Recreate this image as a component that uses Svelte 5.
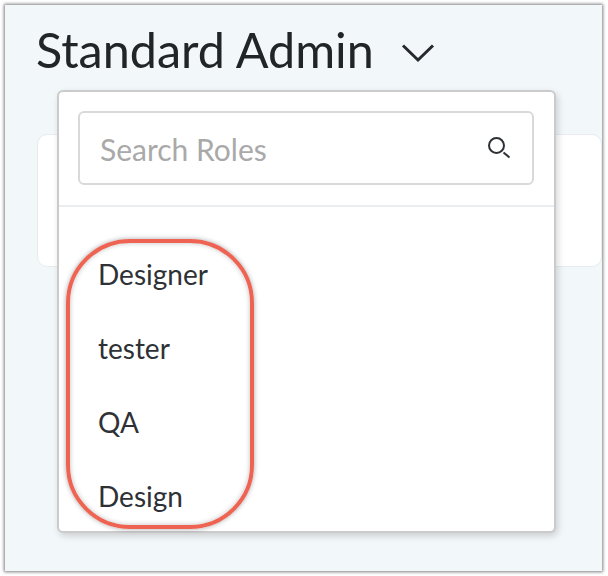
<script lang="ts">
  const roles = ['Designer', 'tester', 'QA', 'Design'];
</script>

<div class="screen">
  <div class="window">
    <header class="title">
      <h1>Standard Admin</h1>
      <svg class="chevron" width="34" height="20" viewBox="0 0 34 20" aria-hidden="true">
        <path d="M2 2.5 L17 17 L32 2.5" fill="none" stroke="#262a2e" stroke-width="3" />
      </svg>
    </header>

    <section class="card"></section>

    <div class="dropdown">
      <div class="search-wrap">
        <div class="search">
          <span class="placeholder">Search Roles</span>
          <svg width="24" height="24" viewBox="0 0 24 24" aria-hidden="true">
            <circle cx="9.5" cy="9.5" r="7.5" fill="none" stroke="#2d3136" stroke-width="2" />
            <path d="M16.5 16.5 L22.5 21.5" fill="none" stroke="#2d3136" stroke-width="2" />
          </svg>
        </div>
      </div>
      <ul class="roles">
        {#each roles as role}
          <li>{role}</li>
        {/each}
      </ul>
      <div class="ring"></div>
    </div>
  </div>
</div>

<style>
  :global(body) {
    background: #fff;
    font-family: Lato, "Liberation Sans", sans-serif;
    margin: 0;
  }

  .screen {
    box-sizing: border-box;
    height: 576px;
    padding: 5px 6px 5px 5px;
    width: 608px;
  }

  .window {
    background: #f2f7fa;
    box-shadow: 0 0 3px 1px #7f7f7f;
    height: 100%;
    overflow: hidden;
    position: relative;
  }

  .title {
    align-items: center;
    display: flex;
    gap: 27px;
    padding: 14px 0 0 31px;
  }

  h1 {
    color: #222528;
    font-size: 48.5px;
    font-weight: 400;
    line-height: 60px;
    margin: 0;
  }

  .chevron {
    margin-top: 7px;
  }

  .card {
    background: #fff;
    border: 1px solid #e6ebef;
    border-radius: 10px;
    box-sizing: border-box;
    height: 133px;
    margin: 55px 0 0 32px;
  }

  .dropdown {
    background: #fff;
    border: 2px solid #cbcbcb;
    border-radius: 6px;
    box-shadow: 2px 3px 7px rgba(0, 0, 0, 0.16);
    box-sizing: border-box;
    height: 443px;
    left: 52px;
    position: absolute;
    top: 85px;
    width: 499px;
  }

  .search-wrap {
    border-bottom: 2px solid #ebeef0;
    padding: 19px 20px 20px 19px;
  }

  .search {
    align-items: center;
    border: 2px solid #d9d9d9;
    border-radius: 6px;
    box-sizing: border-box;
    display: flex;
    height: 74px;
    justify-content: space-between;
    padding: 0 21px 0 20px;
  }

  .placeholder {
    color: #a9a9a9;
    font-size: 30px;
    padding-top: 2px;
  }

  .roles {
    color: #2e3135;
    font-size: 28px;
    list-style: none;
    margin: 0;
    padding: 30px 0 0 39px;
  }

  .roles li {
    height: 74px;
    line-height: 74px;
  }

  .ring {
    border: 4px solid #ee6352;
    border-radius: 64px;
    box-shadow: 0 0 5px rgba(0, 0, 0, 0.35), inset 0 0 5px rgba(0, 0, 0, 0.25);
    box-sizing: border-box;
    height: 290px;
    left: 7px;
    position: absolute;
    top: 147px;
    width: 188px;
  }
</style>
